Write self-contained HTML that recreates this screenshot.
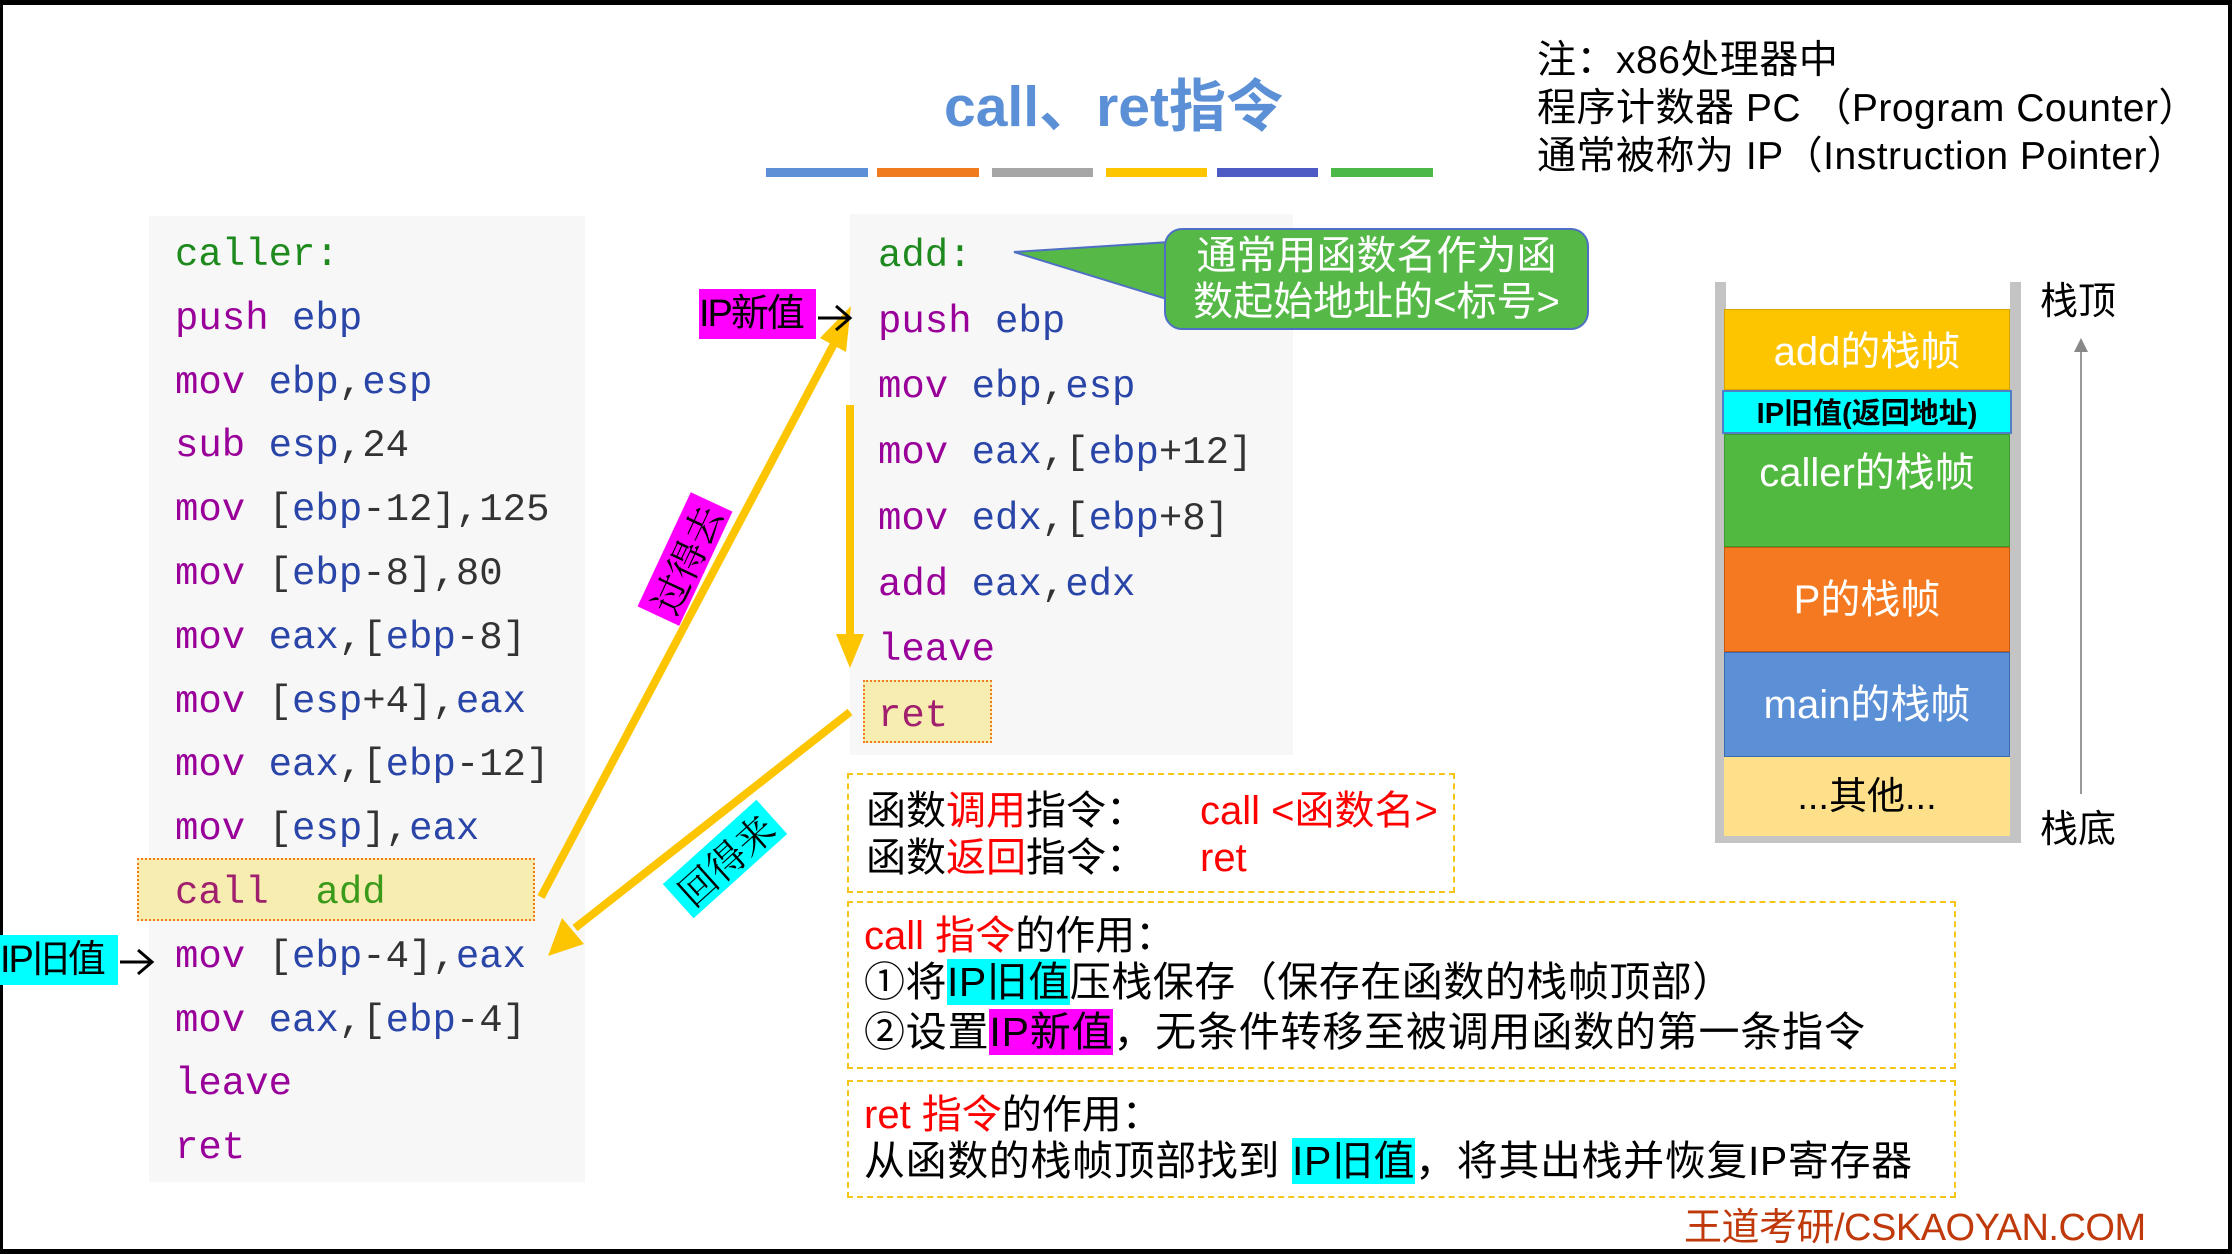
<!DOCTYPE html>
<html><head><meta charset="utf-8"><style>
*{margin:0;padding:0;box-sizing:border-box}
body{width:2232px;height:1254px;position:relative;background:#fff;overflow:hidden;font-family:"Liberation Sans","Noto Sans CJK SC",sans-serif}
.a{position:absolute;white-space:nowrap}
.code{font-family:"Liberation Mono","DejaVu Sans Mono",monospace;font-size:39px;line-height:1}
.m{color:#990099}.r{color:#2a45a8}.g{color:#1e8a1e}.k{color:#333}
.cn{font-family:"Liberation Sans","Noto Sans CJK SC",sans-serif;font-size:40px;line-height:1;color:#000}
.red{color:#ff0000}
.box{position:absolute;border:2px dashed #f5c518}
</style></head><body>
<div class="a" style="left:0;top:0;width:2232px;height:5px;background:#000"></div>
<div class="a" style="left:0;top:1249px;width:2232px;height:5px;background:#000"></div>
<div class="a" style="left:0;top:0;width:3px;height:1254px;background:#000"></div>
<div class="a" style="left:2228px;top:0;width:4px;height:1254px;background:#000"></div>

<div class="a" style="left:944px;top:61px;font-size:57px;font-weight:bold;color:#5b8fd6;font-family:'Liberation Sans','Noto Sans CJK SC',sans-serif">call、ret指令</div>
<div class="a" style="left:766px;top:168px;width:102px;height:9px;background:#5b8fd6"></div>
<div class="a" style="left:877px;top:168px;width:102px;height:9px;background:#f07a1e"></div>
<div class="a" style="left:992px;top:168px;width:101px;height:9px;background:#a6a6a6"></div>
<div class="a" style="left:1106px;top:168px;width:101px;height:9px;background:#fcc500"></div>
<div class="a" style="left:1217px;top:168px;width:101px;height:9px;background:#4f5bc4"></div>
<div class="a" style="left:1331px;top:168px;width:102px;height:9px;background:#4bb848"></div>

<div class="a cn" style="left:1537px;top:37px;font-size:39px;line-height:48px;letter-spacing:0.5px">注：x86处理器中<br>程序计数器 PC （Program Counter）<br>通常被称为 IP（Instruction Pointer）</div>

<!-- left code -->
<div class="a" style="left:149px;top:216px;width:436px;height:966px;background:#f7f7f7"></div>
<div class="a" style="left:137px;top:858px;width:398px;height:63px;background:#f8edb0;border:2px dotted #f07a1e"></div>
<div class="a code" style="left:175px;top:224px;line-height:63.8px">
<span class="g">caller:</span><br>
<span class="m">push</span> <span class="r">ebp</span><br>
<span class="m">mov</span> <span class="r">ebp</span><span class="k">,</span><span class="r">esp</span><br>
<span class="m">sub</span> <span class="r">esp</span><span class="k">,24</span><br>
<span class="m">mov</span> <span class="k">[</span><span class="r">ebp</span><span class="k">-12],125</span><br>
<span class="m">mov</span> <span class="k">[</span><span class="r">ebp</span><span class="k">-8],80</span><br>
<span class="m">mov</span> <span class="r">eax</span><span class="k">,[</span><span class="r">ebp</span><span class="k">-8]</span><br>
<span class="m">mov</span> <span class="k">[</span><span class="r">esp</span><span class="k">+4],</span><span class="r">eax</span><br>
<span class="m">mov</span> <span class="r">eax</span><span class="k">,[</span><span class="r">ebp</span><span class="k">-12]</span><br>
<span class="m">mov</span> <span class="k">[</span><span class="r">esp</span><span class="k">],</span><span class="r">eax</span><br>
<span style="color:#a0206e">call</span>&nbsp; <span style="color:#3a9a1a">add</span><br>
<span class="m">mov</span> <span class="k">[</span><span class="r">ebp</span><span class="k">-4],</span><span class="r">eax</span><br>
<span class="m">mov</span> <span class="r">eax</span><span class="k">,[</span><span class="r">ebp</span><span class="k">-4]</span><br>
<span class="m">leave</span><br>
<span class="m">ret</span>
</div>

<!-- right code -->
<div class="a" style="left:850px;top:214px;width:443px;height:541px;background:#f7f7f7"></div>
<div class="a" style="left:863px;top:680px;width:129px;height:63px;background:#f8edb0;border:2px dotted #f07a1e"></div>
<div class="a code" style="left:878px;top:224px;line-height:65.7px">
<span class="g">add:</span><br>
<span class="m">push</span> <span class="r">ebp</span><br>
<span class="m">mov</span> <span class="r">ebp</span><span class="k">,</span><span class="r">esp</span><br>
<span class="m">mov</span> <span class="r">eax</span><span class="k">,[</span><span class="r">ebp</span><span class="k">+12]</span><br>
<span class="m">mov</span> <span class="r">edx</span><span class="k">,[</span><span class="r">ebp</span><span class="k">+8]</span><br>
<span class="m">add</span> <span class="r">eax</span><span class="k">,</span><span class="r">edx</span><br>
<span class="m">leave</span><br>
<span style="color:#a0206e">ret</span>
</div>

<!-- arrows -->
<svg class="a" style="left:0;top:0" width="2232" height="1254">
<polygon points="1014,252 1170,242 1170,300" fill="#56b947" stroke="#4f6fc4" stroke-width="2"/>
<g stroke="#fcc500" stroke-width="8" fill="none">
<line x1="541" y1="897" x2="836" y2="340"/>
<line x1="850" y1="405" x2="850" y2="640"/>
<line x1="850" y1="712" x2="575" y2="928"/>
</g>
<polygon points="851,306 846,352 820,338" fill="#fcc500"/>
<polygon points="850,668 836,634 864,634" fill="#fcc500"/>
<polygon points="548,956 562,918 584,944" fill="#fcc500"/>
<g stroke="#000" stroke-width="3" fill="none">
<path d="M818 318 H848 M836 306 L850 318 L836 330"/>
<path d="M120 962 H150 M138 950 L152 962 L138 974"/>
</g>
<line x1="2081" y1="350" x2="2081" y2="794" stroke="#999" stroke-width="2"/>
<polygon points="2081,338 2074,352 2088,352" fill="#888"/>
</svg>

<div class="a" style="left:1164px;top:228px;width:425px;height:102px;background:#56b947;border:2px solid #4f6fc4;border-radius:18px;color:#fff;font-size:40px;line-height:46px;text-align:center;padding-top:3px;font-family:'Liberation Sans','Noto Sans CJK SC',sans-serif">通常用函数名作为函<br>数起始地址的&lt;标号&gt;</div>

<div class="a cn" style="left:699px;top:289px;width:117px;height:50px;background:#ff00ff;font-size:38px;line-height:50px;letter-spacing:-2px">IP新值</div>
<div class="a cn" style="left:0;top:935px;width:118px;height:50px;background:#00ffff;font-size:38px;line-height:50px;letter-spacing:-2px">IP旧值</div>

<div class="a cn" style="left:622px;top:536px;background:#ff00ff;font-size:38px;line-height:46px;padding:0 6px;transform:rotate(-65deg);font-family:'Noto Serif CJK SC',serif">过得去</div>
<div class="a cn" style="left:662px;top:836px;background:#00ffff;font-size:38px;line-height:46px;padding:0 6px;transform:rotate(-42deg);font-family:'Noto Serif CJK SC',serif">回得来</div>

<!-- stack -->
<div class="a" style="left:1715px;top:282px;width:11px;height:561px;background:#c4c4c4"></div>
<div class="a" style="left:2010px;top:282px;width:11px;height:561px;background:#c4c4c4"></div>
<div class="a" style="left:1715px;top:836px;width:306px;height:7px;background:#c4c4c4"></div>
<div class="a" style="left:1724px;top:309px;width:286px;height:81px;background:#fcc500;color:#fff;font-size:40px;text-align:center;line-height:84px;border:1px solid #d9a400">add的栈帧</div>
<div class="a" style="left:1722px;top:390px;width:290px;height:44px;background:#00ffff;color:#000;font-size:29px;font-weight:bold;text-align:center;line-height:44px;border:2px solid #4f7fc4">IP旧值(返回地址)</div>
<div class="a" style="left:1724px;top:434px;width:286px;height:113px;background:#52b940;color:#fff;font-size:40px;text-align:center;line-height:76px;border:1px solid #3c9a30">caller的栈帧</div>
<div class="a" style="left:1724px;top:547px;width:286px;height:105px;background:#f47920;color:#fff;font-size:40px;text-align:center;line-height:105px;border:1px solid #c85a10">P的栈帧</div>
<div class="a" style="left:1724px;top:652px;width:286px;height:105px;background:#5b8fd6;color:#fff;font-size:40px;text-align:center;line-height:105px;border:1px solid #3c6ab0">main的栈帧</div>
<div class="a" style="left:1724px;top:757px;width:286px;height:79px;background:#fedf8a;color:#000;font-size:38px;text-align:center;line-height:80px">...其他...</div>
<div class="a cn" style="left:2040px;top:283px;font-size:38px">栈顶</div>
<div class="a cn" style="left:2040px;top:811px;font-size:38px">栈底</div>

<!-- info boxes -->
<div class="box" style="left:847px;top:773px;width:608px;height:120px"></div>
<div class="a cn" style="left:866px;top:791px">函数<span class="red">调用</span>指令：<span class="red" style="position:absolute;left:334px">call &lt;函数名&gt;</span></div>
<div class="a cn" style="left:866px;top:838px">函数<span class="red">返回</span>指令：<span class="red" style="position:absolute;left:334px">ret</span></div>

<div class="box" style="left:847px;top:901px;width:1109px;height:168px"></div>
<div class="a cn" style="left:864px;top:916px"><span class="red">call 指令</span>的作用：</div>
<div class="a cn" style="left:864px;top:962px;font-size:41px;letter-spacing:0.5px">①将<span style="background:#00ffff">IP旧值</span>压栈保存（保存在函数的栈帧顶部）</div>
<div class="a cn" style="left:864px;top:1012px;font-size:41px;letter-spacing:0.8px">②设置<span style="background:#ff00ff">IP新值</span>，无条件转移至被调用函数的第一条指令</div>

<div class="box" style="left:847px;top:1080px;width:1109px;height:118px"></div>
<div class="a cn" style="left:864px;top:1095px"><span class="red">ret 指令</span>的作用：</div>
<div class="a cn" style="left:864px;top:1141px;font-size:41px;letter-spacing:0.6px">从函数的栈帧顶部找到 <span style="background:#00ffff">IP旧值</span>，将其出栈并恢复IP寄存器</div>

<div class="a" style="left:1684px;top:1196px;font-size:38px;color:#c0390b;letter-spacing:-0.5px">王道考研/CSKAOYAN.COM</div>
</body></html>
